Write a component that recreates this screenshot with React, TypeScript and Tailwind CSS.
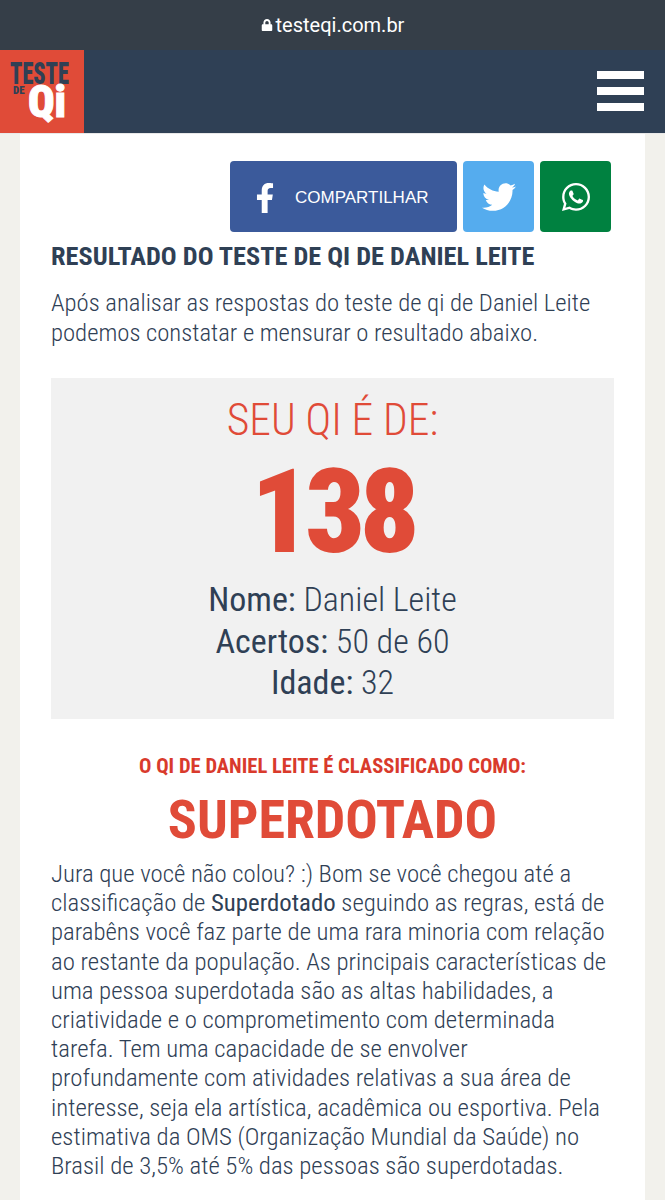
import { FaFacebookF, FaLock, FaTwitter, FaWhatsapp } from "react-icons/fa";

const roboto = "font-['Roboto','Liberation_Sans',sans-serif] [font-stretch:75%]";

function Logo() {
  return (
    <div className="relative h-[83px] w-[84px] shrink-0 overflow-hidden bg-[#e04b38]">
      <span className="absolute left-[10px] top-[8px] origin-left scale-x-[0.72] text-[31px] font-black leading-[31px] whitespace-nowrap text-[#2f4055]">
        TESTE
      </span>
      <span className="absolute left-[13px] top-[35px] text-[11px] font-black leading-[12px] text-[#2f4055]">DE</span>
      <span className="absolute left-[28px] top-[28px] text-[44px] font-black leading-[48px] text-white [-webkit-text-stroke:1px_white] [font-stretch:85%]">
        Qi
      </span>
    </div>
  );
}

function Info({ label, value }: { label: string; value: string }) {
  return (
    <p className="text-[34px] leading-[41.5px] font-light text-[#2f4055]">
      <span className="font-normal">{label}</span> {value}
    </p>
  );
}

export default function App() {
  return (
    <div className={`h-[1200px] w-[665px] overflow-hidden bg-[#f2f1ec] ${roboto}`}>
      <div className="flex h-[50px] items-center justify-center gap-[3px] bg-[#353e48] text-white [font-stretch:100%]">
        <FaLock size={12} />
        <span className="text-[20px]">testeqi.com.br</span>
      </div>
      <header className="flex h-[84px] items-start justify-between border-b border-[#e8e8e8] bg-[#2f4055] pr-[21px]">
        <Logo />
        <div className="mt-[21px] flex w-[47px] flex-col gap-[8px]">
          <div className="h-[8px] bg-white" />
          <div className="h-[8px] bg-white" />
          <div className="h-[8px] bg-white" />
        </div>
      </header>
      <main className="mx-[20px] h-[1066px] bg-white px-[31px] pt-[27px]">
        <div className="flex justify-end gap-[6px] pr-[3px]">
          <a className="flex h-[71px] w-[227px] items-center rounded-[4px] bg-[#3b5a9b] pt-[3px] pl-[20px] text-white">
            <FaFacebookF size={30} />
            <span className="ml-[15px] font-['Liberation_Sans',sans-serif] text-[17px]">COMPARTILHAR</span>
          </a>
          <a className="flex h-[71px] w-[71px] items-center justify-center rounded-[4px] bg-[#55acee] text-white">
            <FaTwitter size={34} />
          </a>
          <a className="flex h-[71px] w-[71px] items-center justify-center rounded-[4px] bg-[#008140] text-white">
            <FaWhatsapp size={32} />
          </a>
        </div>
        <h1 className="mt-[7px] text-[26.3px] leading-[34px] font-bold whitespace-nowrap text-[#2f4055]">
          RESULTADO DO TESTE DE QI DE DANIEL LEITE
        </h1>
        <p className="mt-[15px] text-[24.7px] leading-[30px] font-light text-[#2f4055]">
          Após analisar as respostas do teste de qi de Daniel Leite podemos constatar e mensurar o resultado abaixo.
        </p>
        <section className="mt-[30px] flex h-[341px] flex-col items-center bg-[#f1f1f1] text-center">
          <p className="mt-[18px] text-[43.5px] leading-[50px] font-light text-[#e04b38]">SEU QI É DE:</p>
          <p className="mt-[9px] text-[117px] leading-[115px] font-black tracking-[-5.5px] text-[#e04b38]">138</p>
          <div className="mt-[9px]">
            <Info label="Nome:" value="Daniel Leite" />
            <Info label="Acertos:" value="50 de 60" />
            <Info label="Idade:" value="32" />
          </div>
        </section>
        <h2 className="mt-[35px] text-center text-[20.6px] leading-[24px] font-bold text-[#d93a2c]">
          O QI DE DANIEL LEITE É CLASSIFICADO COMO:
        </h2>
        <p className="mt-[14px] text-center text-[54px] leading-[56px] font-bold text-[#e04b38]">SUPERDOTADO</p>
        <p className="mt-[11px] text-[24.8px] leading-[29.2px] font-light text-[#2f4055]">
          Jura que você não colou? :) Bom se você chegou até a classificação de <strong className="font-normal">Superdotado</strong> seguindo as regras, está de parabêns você faz parte de uma rara minoria com relação ao restante da população. As principais características de uma pessoa superdotada são as altas habilidades, a criatividade e o comprometimento com determinada tarefa. Tem uma capacidade de se envolver profundamente com atividades relativas a sua área de interesse, seja ela artística, acadêmica ou esportiva. Pela estimativa da OMS (Organização Mundial da Saúde) no Brasil de 3,5% até 5% das pessoas são superdotadas.
        </p>
      </main>
    </div>
  );
}
